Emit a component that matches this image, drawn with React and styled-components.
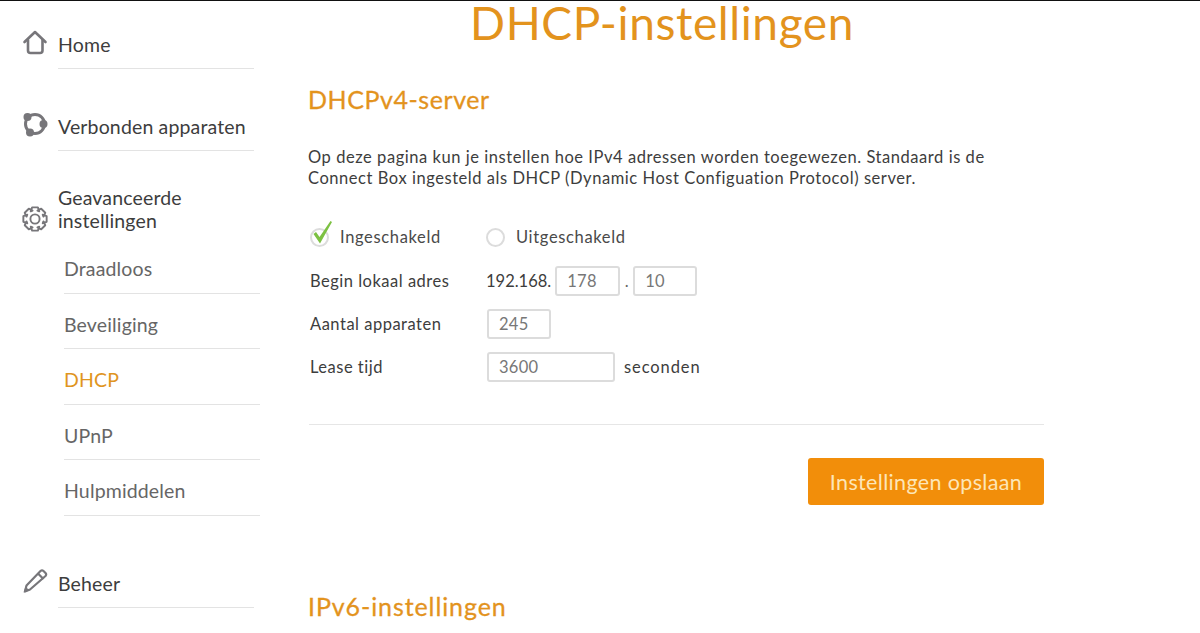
import React from "react"
import styled, { createGlobalStyle } from "styled-components"

const Global = createGlobalStyle`
html, body {
  margin: 0;
  padding: 0;
  background: #fff;
  overflow: hidden;
}
body {
  font-family: "Lato", "Open Sans", sans-serif;
  color: #333;
}
`

const Page = styled.div`
  width: 1200px;
  height: 633px;
  box-sizing: border-box;
  border-top: 1px solid #111;
  display: flex;
  overflow: hidden;
`

const Sidebar = styled.nav`
  width: 280px;
  flex: none;
  padding: 21px 0 0 22px;
  box-sizing: border-box;
`

const NavItem = styled.div`
  display: flex;
  align-items: ${(p) => (p.$multi ? "flex-end" : "center")};
  margin-top: ${(p) => p.$top || 0}px;
  width: 232px;
`

const IconSlot = styled.div`
  width: 26px;
  height: 26px;
  flex: none;
  margin-right: 10px;
  margin-bottom: ${(p) => p.$lift || 0}px;
  color: #77767a;
  svg { display: block; }
`

const NavLabel = styled.div`
  flex: 1;
  font-size: 19.5px;
  letter-spacing: 0.15px;
  line-height: 23px;
  color: #3d3d3d;
  padding: ${(p) => (p.$multi ? "12px 0 0" : "11px 0 12px")};
  border-bottom: ${(p) => (p.$multi ? "none" : "1px solid #e3e3e3")};
  margin-top: ${(p) => (p.$multi ? -12 : 0)}px;
`

const SubList = styled.div`
  margin-left: 42px;
  width: 196px;
  margin-top: 6px;
`

const SubItem = styled.div`
  font-size: 19.5px;
  letter-spacing: 0.15px;
  line-height: 23px;
  height: 55.5px;
  box-sizing: border-box;
  padding-top: 19px;
  border-bottom: 1px solid #e3e3e3;
  color: ${(p) => (p.$active ? "#e0951f" : "#666")};
`

const Main = styled.main`
  flex: 1;
  padding-left: 28px;
  width: 736px;
`

const Title = styled.h1`
  margin: 0;
  width: 708px;
  text-align: center;
  font-size: 46px;
  line-height: 44px;
  letter-spacing: 0.6px;
  font-weight: 400;
  color: #e3931d;
`

const Section = styled.section`
  width: 736px;
`

const Heading = styled.h2`
  margin: ${(p) => p.$top}px 0 0;
  font-size: 25px;
  line-height: 30px;
  letter-spacing: ${(p) => p.$spacing}px;
  font-weight: 400;
  color: #e3931d;
  -webkit-text-stroke: 0.3px #e3931d;
`

const Intro = styled.p`
  margin: 33px 0 0;
  font-size: 16.5px;
  letter-spacing: 0.55px;
  line-height: 21px;
  color: #3d3d3d;
`

const RadioRow = styled.div`
  display: flex;
  align-items: center;
  margin-top: 35px;
  padding-left: 2px;
  height: 26px;
`

const RadioOption = styled.label`
  display: flex;
  align-items: center;
  width: ${(p) => p.$width}px;
  font-size: 16.5px;
  letter-spacing: 0.65px;
  color: #4a4a4a;
`

const RadioCircle = styled.span`
  position: relative;
  width: 15px;
  height: 15px;
  border: 2px solid #dcdcdc;
  border-radius: 50%;
  flex: none;
  margin-right: 11px;
  svg {
    position: absolute;
    left: -1px;
    top: -10px;
  }
`

const FieldRow = styled.div`
  display: flex;
  align-items: center;
  height: 32px;
  margin-top: ${(p) => p.$top}px;
  font-size: 16.5px;
  color: #3d3d3d;
  padding-left: 2px;
`

const FieldLabel = styled.div`
  width: 176px;
  flex: none;
  letter-spacing: 0.5px;
`

const Box = styled.div`
  width: ${(p) => p.$width}px;
  height: 30px;
  box-sizing: border-box;
  border: 2px solid #dcdcdc;
  border-radius: 3px;
  padding-left: 10px;
  font-size: 16.5px;
  letter-spacing: 0.3px;
  line-height: 26px;
  color: #777;
  margin-left: ${(p) => p.$left || 0}px;
`

const Sep = styled.div`
  color: #666;
  width: 13px;
  text-align: center;
`

const Unit = styled.div`
  margin-left: 9px;
  letter-spacing: 0.9px;
`

const Divider = styled.hr`
  border: none;
  border-top: 1px solid #e6e6e6;
  margin: 41px 0 0 1px;
  width: 735px;
`

const Actions = styled.div`
  display: flex;
  justify-content: flex-end;
  margin-top: 33px;
`

const SaveButton = styled.button`
  width: 236px;
  height: 47px;
  border: none;
  border-radius: 3px;
  background: #f28e0a;
  color: #fde6b8;
  font-family: inherit;
  font-size: 21.5px;
  letter-spacing: 0.35px;
`

function HomeIcon() {
  return (
    <svg width="26" height="26" viewBox="0 0 26 26" fill="none" stroke="currentColor" strokeWidth="2.6" strokeLinejoin="round" strokeLinecap="round">
      <path d="M2.5 12 L13 2 L23.5 12" />
      <path d="M6 10 V20.5 Q6 23 8.5 23 H18 Q20.5 23 20.5 20.5 V10" />
    </svg>
  )
}

function DevicesIcon() {
  return (
    <svg width="26" height="26" viewBox="0 0 26 26" fill="none" stroke="currentColor" strokeWidth="3">
      <circle cx="13" cy="13" r="9.5" />
      <circle cx="5.5" cy="6" r="4" fill="currentColor" stroke="none" />
      <circle cx="21.5" cy="13" r="4" fill="currentColor" stroke="none" />
      <circle cx="8" cy="21.5" r="4" fill="currentColor" stroke="none" />
    </svg>
  )
}

// 8 tands tandwiel, punten worden uitgerekend
function gearPath(cx, cy, outer, inner) {
  const pts = []
  for (let i = 0; i < 8; i++) {
    const a = (i * Math.PI) / 4 - Math.PI / 2
    const w = Math.PI / 13
    const n = Math.PI / 9
    pts.push([outer, a - w], [outer, a + w], [inner, a + n * 1.45], [inner, a + Math.PI / 4 - n * 1.45])
  }
  return (
    pts
      .map(([r, a], i) => `${i ? "L" : "M"}${(cx + r * Math.cos(a)).toFixed(2)} ${(cy + r * Math.sin(a)).toFixed(2)}`)
      .join(" ") + " Z"
  )
}

function GearIcon() {
  return (
    <svg width="26" height="26" viewBox="0 0 26 26" fill="none" stroke="currentColor" strokeWidth="1.9" strokeLinejoin="round">
      <path d={gearPath(13, 13, 12, 8.8)} />
      <circle cx="13" cy="13" r="4.6" />
    </svg>
  )
}

function PencilIcon() {
  return (
    <svg width="26" height="26" viewBox="0 0 26 26" fill="none" stroke="currentColor" strokeWidth="2.2" strokeLinejoin="round">
      <path d="M8 21.5 L3 23.5 L4.5 17.5 L18.5 3 Q20 1.6 21.5 3 L23.5 5 Q24.8 6.5 23.5 8 Z" />
      <path d="M16 5.5 L21.5 11" />
      <path d="M1.5 24.5 L3.5 18.5 L7.5 22.5 Z" fill="currentColor" stroke="none" />
    </svg>
  )
}

function CheckMark() {
  return (
    <svg width="24" height="26" viewBox="0 0 24 26">
      <path d="M2.5 14 L5 12 L8.5 17 L19.5 1 L21 2 L9 23.5 Z" fill="#7cc142" />
    </svg>
  )
}

export default function App() {
  return (
    <Page>
      <Global />
      <Sidebar>
        <NavItem>
          <IconSlot $lift={6}><HomeIcon /></IconSlot>
          <NavLabel>Home</NavLabel>
        </NavItem>
        <NavItem $top={35}>
          <IconSlot $lift={7}><DevicesIcon /></IconSlot>
          <NavLabel>Verbonden apparaten</NavLabel>
        </NavItem>
        <NavItem $top={35} $multi>
          <IconSlot><GearIcon /></IconSlot>
          <NavLabel $multi>Geavanceerde instellingen</NavLabel>
        </NavItem>
        <SubList>
          <SubItem>Draadloos</SubItem>
          <SubItem>Beveiliging</SubItem>
          <SubItem $active>DHCP</SubItem>
          <SubItem>UPnP</SubItem>
          <SubItem>Hulpmiddelen</SubItem>
        </SubList>
        <NavItem $top={45}>
          <IconSlot $lift={7}><PencilIcon /></IconSlot>
          <NavLabel>Beheer</NavLabel>
        </NavItem>
      </Sidebar>
      <Main>
        <Title>DHCP-instellingen</Title>
        <Section>
          <Heading $top={39} $spacing={0.55}>DHCPv4-server</Heading>
          <Intro>
            Op deze pagina kun je instellen hoe IPv4 adressen worden toegewezen. Standaard is de
            <br />
            Connect Box ingesteld als DHCP (Dynamic Host Configuation Protocol) server.
          </Intro>
          <RadioRow>
            <RadioOption $width={176}>
              <RadioCircle><CheckMark /></RadioCircle>
              Ingeschakeld
            </RadioOption>
            <RadioOption $width={200}>
              <RadioCircle />
              Uitgeschakeld
            </RadioOption>
          </RadioRow>
          <FieldRow $top={15}>
            <FieldLabel>Begin lokaal adres</FieldLabel>
            192.168.
            <Box $width={65} $left={4}>178</Box>
            <Sep>.</Sep>
            <Box $width={64}>10</Box>
          </FieldRow>
          <FieldRow $top={11}>
            <FieldLabel>Aantal apparaten</FieldLabel>
            <Box $width={64} $left={1}>245</Box>
          </FieldRow>
          <FieldRow $top={11}>
            <FieldLabel>Lease tijd</FieldLabel>
            <Box $width={128} $left={1}>3600</Box>
            <Unit>seconden</Unit>
          </FieldRow>
          <Divider />
          <Actions>
            <SaveButton>Instellingen opslaan</SaveButton>
          </Actions>
          <Heading $top={86} $spacing={0.9}>IPv6-instellingen</Heading>
        </Section>
      </Main>
    </Page>
  )
}
